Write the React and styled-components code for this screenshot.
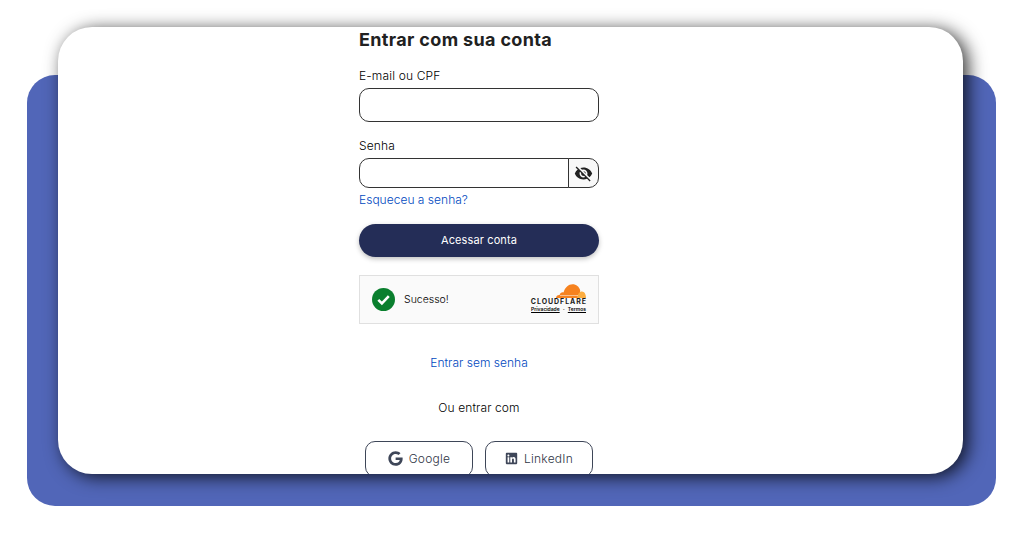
import React from 'react';
import styled, {createGlobalStyle} from 'styled-components';
import {FaGoogle, FaLinkedin} from 'react-icons/fa';
import {MdVisibilityOff} from 'react-icons/md';

const GlobalStyle = createGlobalStyle`
  html, body {
    margin: 0;
    padding: 0;
    background: #fff;
    font-family: Inter, "Liberation Sans", sans-serif;
    overflow: hidden;
  }
`;

const Page = styled.div`
  height: 536px;
  box-sizing: border-box;
  padding: 75px 28px 30px 27px;
`;

const Panel = styled.div`
  height: 431px;
  background: #5166b8;
  border-radius: 28px;
  display: flow-root;
`;

const Card = styled.main`
  margin: -48px 33px 0 31px;
  height: 447px;
  box-sizing: border-box;
  background: #fff;
  border-radius: 34px;
  box-shadow: 5px 3px 18px rgba(0, 0, 0, 0.8);
  overflow: hidden;
  padding: 0 0 0 301px;
`;

const Column = styled.div`
  width: 240px;
  display: flex;
  flex-direction: column;
`;

const Title = styled.h1`
  margin: 1px 0 0;
  font-size: 18px;
  line-height: 24px;
  font-weight: 700;
  letter-spacing: 0.35px;
  color: #212121;
`;

const Label = styled.label`
  display: block;
  margin-top: ${(props) => props.$top}px;
  font-size: 12px;
  line-height: 16px;
  font-weight: 300;
  letter-spacing: 0.15px;
  color: #000;
`;

const EmailInput = styled.input`
  display: block;
  box-sizing: border-box;
  width: 100%;
  height: 34px;
  margin-top: 4px;
  border: 1px solid #333;
  border-radius: 10px;
  background: #fff;
`;

const PasswordRow = styled.div`
  display: flex;
  height: 30px;
  margin-top: 4px;
`;

const PasswordInput = styled.input`
  flex: 1;
  min-width: 0;
  box-sizing: border-box;
  border: 1px solid #333;
  border-radius: 10px 0 0 10px;
  background: #fff;
`;

const EyeButton = styled.button`
  width: 31px;
  margin-left: -1px;
  padding: 0;
  display: flex;
  align-items: center;
  justify-content: center;
  border: 1px solid #333;
  border-radius: 0 10px 10px 0;
  background: #f8f8f8;
  color: #212121;
  font-size: 19px;
`;

const BlueLink = styled.a`
  font-size: 12px;
  line-height: 16px;
  font-weight: 300;
  letter-spacing: 0.02px;
  color: #0048c0;
  text-decoration: none;
  text-align: ${(props) => props.$align || 'left'};
  margin-top: ${(props) => props.$top}px;
`;

const SubmitButton = styled.button`
  height: 33px;
  margin-top: 16px;
  padding: 0 0 2px;
  border: 0;
  border-radius: 17px;
  background: #242d57;
  color: #fff;
  font: 400 11px Inter, sans-serif;
  letter-spacing: 0.12px;
  box-shadow: 0 2px 5px rgba(0, 0, 0, 0.25);
`;

const Turnstile = styled.div`
  height: 49px;
  margin-top: 18px;
  box-sizing: border-box;
  border: 1px solid #e0e0e0;
  background: #fafafa;
  display: flex;
  align-items: center;
  padding: 0 12px;
`;

const SuccessText = styled.span`
  margin-left: 9px;
  font-size: 10.5px;
  font-weight: 300;
  color: #000;
`;

const CloudBrand = styled.div`
  margin: 0 0 2px auto;
  display: flex;
  flex-direction: column;
  align-items: flex-end;
`;

const BrandName = styled.span`
  font-size: 7px;
  line-height: 8px;
  font-weight: 700;
  letter-spacing: 0.95px;
  margin-right: -1px;
  color: #1d1d1d;
`;

const BrandLinks = styled.span`
  font-size: 5px;
  line-height: 7px;
  font-weight: 600;
  color: #000;
  white-space: nowrap;
  word-spacing: 2px;
  u {
    text-decoration: underline;
  }
`;

const Divider = styled.p`
  margin: 29px 0 0;
  text-align: center;
  font-size: 12px;
  line-height: 16px;
  font-weight: 300;
  letter-spacing: 0.1px;
  color: #000;
`;

const SocialRow = styled.div`
  display: flex;
  justify-content: center;
  gap: 12px;
  margin-top: 25px;
`;

const SocialButton = styled.button`
  width: 108px;
  height: 36px;
  flex: none;
  padding: 0 0 1px;
  display: flex;
  align-items: center;
  justify-content: center;
  gap: 6px;
  border: 1px solid #3e4658;
  border-radius: 10px;
  background: #fff;
  color: #2f3646;
  font: 300 12px Inter, sans-serif;
  letter-spacing: 0.25px;
  svg {
    font-size: ${(props) => props.$icon}px;
    color: #3e4658;
  }
`;

const CheckBadge = () => (
  <svg width="23" height="23" viewBox="0 0 23 23" aria-hidden="true">
    <circle cx="11.5" cy="11.5" r="11.5" fill="#0a7f2e" />
    <path d="M6.300 11.800l3.600 3.600 6.900-7.200" fill="none" stroke="#fff" strokeWidth="2.600" />
  </svg>
);

const CloudLogo = () => (
  <svg width="30" height="14" viewBox="0 0 30 14" aria-hidden="true">
    <path
      d="M0 14c.2-2.200 1.700-3.200 3.600-3C4.200 8.800 5.900 8 7.500 8.500 9 3.500 12.500.3 16.500.3c3.800 0 6.700 2.400 7.700 6.200L23.500 14z"
      fill="#f6821f"
    />
    <path d="M21 14c.5-4 2.600-6.500 5-6.500 2.300 0 4 2.800 4 6.500z" fill="#fbad41" />
    <path d="M4 11.500h18" stroke="#fff" strokeWidth="0.5" />
  </svg>
);

export default function App() {
  return (
    <Page>
      <GlobalStyle />
      <Panel>
        <Card>
          <Column>
            <Title>Entrar com sua conta</Title>
            <Label $top={16}>E-mail ou CPF</Label>
            <EmailInput type="text" />
            <Label $top={16}>Senha</Label>
            <PasswordRow>
              <PasswordInput type="password" />
              <EyeButton type="button" aria-label="Mostrar senha">
                <MdVisibilityOff />
              </EyeButton>
            </PasswordRow>
            <BlueLink href="#" $top={4}>Esqueceu a senha?</BlueLink>
            <SubmitButton type="button">Acessar conta</SubmitButton>
            <Turnstile>
              <CheckBadge />
              <SuccessText>Sucesso!</SuccessText>
              <CloudBrand>
                <CloudLogo />
                <BrandName>CLOUDFLARE</BrandName>
                <BrandLinks><u>Privacidade</u> · <u>Termos</u></BrandLinks>
              </CloudBrand>
            </Turnstile>
            <BlueLink href="#" $top={31} $align="center">Entrar sem senha</BlueLink>
            <Divider>Ou entrar com</Divider>
            <SocialRow>
              <SocialButton type="button" $icon={15}><FaGoogle />Google</SocialButton>
              <SocialButton type="button" $icon={13}><FaLinkedin />LinkedIn</SocialButton>
            </SocialRow>
          </Column>
        </Card>
      </Panel>
    </Page>
  );
}
